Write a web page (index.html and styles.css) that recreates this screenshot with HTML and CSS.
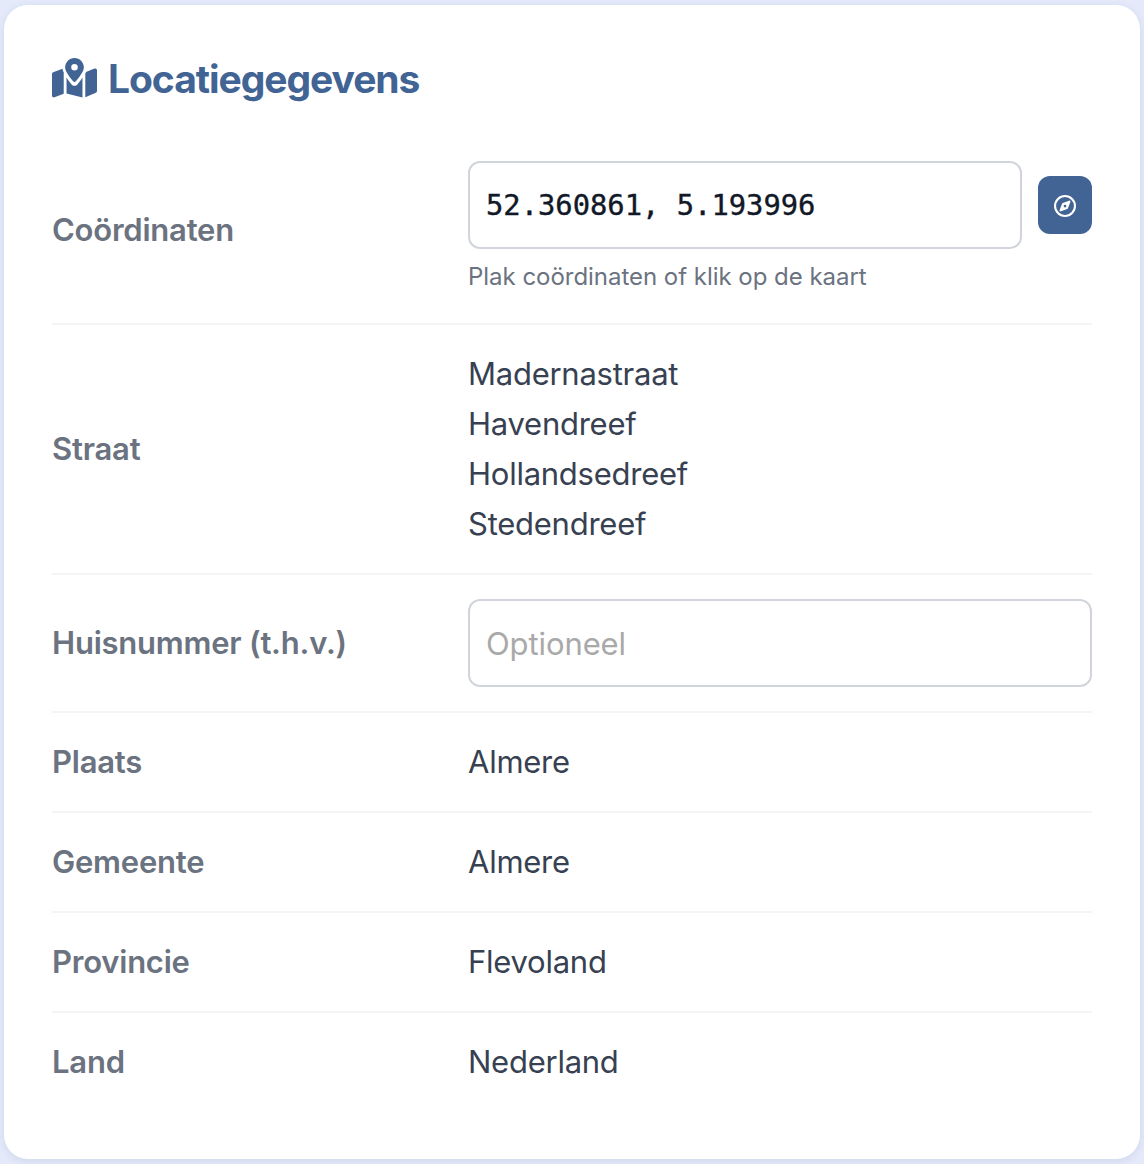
FILE: index.html
```html
<!DOCTYPE html>
<html lang="nl">
<head>
<meta charset="utf-8">
<title>Locatiegegevens</title>
<link rel="stylesheet" href="styles.css">
</head>
<body>
<main class="card">
  <h2 class="card-title">
    <svg class="title-icon" viewBox="0 0 576 512" aria-hidden="true"><path fill="currentColor" d="M408 120c0 52-70 138-103 178c-9 11-25 11-34 0C238 258 168 172 168 120C168 53.7 221.7 0 288 0s120 53.7 120 120zM288 160a42 42 0 1 0 0-84 42 42 0 1 0 0 84zM0 205c0-10 6-18 15-22l118-47c4 19 10 36 17 50V456L32 503C16 509 0 498 0 480zM186 250c20 32 38 56 62 85c22 26 58 26 80 0c24-29 42-53 62-85V506L186 454zM426 202c4-8 7-15 9-23l109-44c16-6 32 5 32 22V423c0 10-6 18-15 22L426 502z"/></svg>
    <span>Locatiegegevens</span>
  </h2>
  <div class="rows">
    <div class="row">
      <label class="label" for="coords">Coördinaten</label>
      <div class="value">
        <div class="input-group">
          <input class="input input-mono" id="coords" type="text" value="52.360861, 5.193996">
          <button class="button" type="button" aria-label="Kompas">
            <svg class="button-icon" viewBox="0 0 512 512" aria-hidden="true"><path fill="currentColor" d="M464 256A208 208 0 1 0 48 256a208 208 0 1 0 416 0zM0 256a256 256 0 1 1 512 0A256 256 0 1 1 0 256zm306.7 69.1L162.4 380.6c-19.4 7.5-38.5-11.6-31-31l55.5-144.3c3.3-8.5 9.9-15.1 18.4-18.4l144.3-55.5c19.4-7.5 38.5 11.6 31 31L325.1 306.7c-3.2 8.5-9.9 15.1-18.4 18.4zM288 256a32 32 0 1 0 -64 0 32 32 0 1 0 64 0z"/></svg>
          </button>
        </div>
        <div class="hint">Plak coördinaten of klik op de kaart</div>
      </div>
    </div>
    <div class="row">
      <div class="label">Straat</div>
      <div class="value">
        <div>Madernastraat</div>
        <div>Havendreef</div>
        <div>Hollandsedreef</div>
        <div>Stedendreef</div>
      </div>
    </div>
    <div class="row">
      <label class="label" for="number">Huisnummer (t.h.v.)</label>
      <div class="value"><input class="input" id="number" type="text" placeholder="Optioneel"></div>
    </div>
    <div class="row"><div class="label">Plaats</div><div class="value">Almere</div></div>
    <div class="row"><div class="label">Gemeente</div><div class="value">Almere</div></div>
    <div class="row"><div class="label">Provincie</div><div class="value">Flevoland</div></div>
    <div class="row"><div class="label">Land</div><div class="value">Nederland</div></div>
  </div>
</main>
</body>
</html>
```
FILE: styles.css
```css
* {
  box-sizing: border-box;
}

body {
  margin: 0;
  padding: 5px 4px;
  background: #e4eafa;
  font-family: Inter, "Liberation Sans", sans-serif;
  font-size: 31px;
  line-height: 50px;
  color: #374151;
}

.card {
  height: 1154px;
  padding: 48px;
  background: #fff;
  border-radius: 24px;
  box-shadow: 0 2px 8px rgba(30, 50, 100, 0.1);
}

.card-title {
  display: flex;
  align-items: center;
  gap: 11px;
  height: 50px;
  margin: 0 0 34px;
  color: #416494;
  font-size: 39px;
  font-weight: 700;
  letter-spacing: -1.05px;
}

.card-title span {
  padding-top: 2px;
}

.title-icon {
  width: 45px;
  height: 40px;
}

.row {
  display: grid;
  grid-template-columns: 40% 60%;
  align-items: center;
  padding: 24px 0;
  border-bottom: 2px solid #f3f4f6;
}

.row:last-child {
  border-bottom: 0;
}

.label {
  color: #6b7280;
  font-weight: 580;
  letter-spacing: -0.22px;
}

.value {
  letter-spacing: -0.25px;
}

.input-group {
  display: flex;
  align-items: center;
  gap: 16px;
}

.input {
  display: block;
  width: 100%;
  min-width: 0;
  height: 88px;
  padding: 0 16px;
  border: 2px solid #d1d5db;
  border-radius: 12px;
  background: #fff;
  color: #111827;
  font: inherit;
  letter-spacing: -0.1px;
}

.input::placeholder {
  color: #a9a9a9;
  opacity: 1;
}

.input-mono {
  flex: 1;
  font-family: "DejaVu Sans Mono", monospace;
  font-size: 28.8px;
  letter-spacing: 0;
  -webkit-text-stroke: 0.4px currentColor;
}

.button {
  display: flex;
  flex: none;
  align-items: center;
  justify-content: center;
  width: 54px;
  height: 58px;
  padding: 0;
  border: 0;
  border-radius: 12px;
  background: #416494;
  color: #fff;
}

.button-icon {
  width: 22px;
  height: 22px;
  margin-top: 2px;
}

.hint {
  margin-top: 8px;
  padding-bottom: 2px;
  color: #6b7280;
  font-size: 24px;
  line-height: 40px;
  letter-spacing: -0.03px;
}
```
